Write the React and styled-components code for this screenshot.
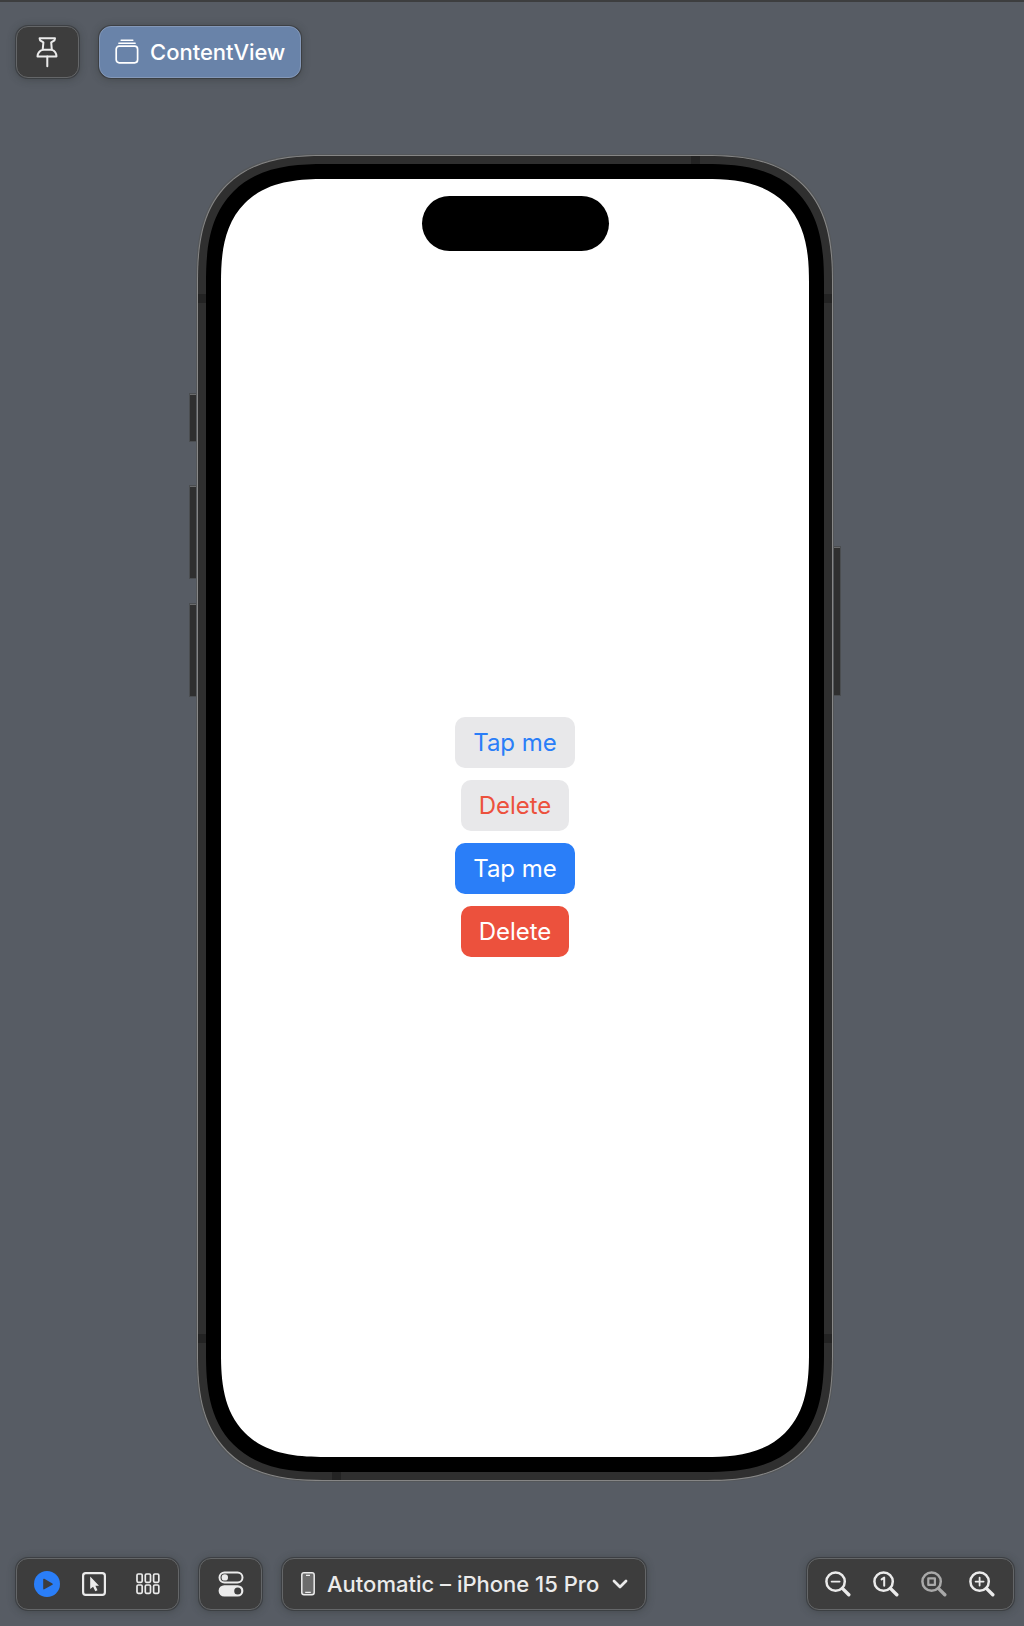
import React from "react";
import styled, { createGlobalStyle, css } from "styled-components";

const GlobalStyle = createGlobalStyle`
  *, *::before, *::after { box-sizing: border-box; }
  body {
    margin: 0;
    background: #575c64;
    font-family: Inter, "Liberation Sans", sans-serif;
  }
  button, select { font: inherit; color: inherit; }
`;

const Canvas = styled.main`
  min-height: 100vh;
  display: flex;
  flex-direction: column;
  padding: 24px 10px 16px 16px;
  border-top: 2px solid #3d3e3f;
  background: #575c64;
`;

const Toolbar = styled.div`
  display: flex;
  align-items: center;
  gap: 20px;
`;

const Spacer = styled.div`
  flex: 1;
`;

const panel = css`
  display: flex;
  align-items: center;
  height: 52px;
  border: 1px solid #646668;
  border-radius: 12px;
  background: #3d3d3d;
  color: #ebebeb;
  box-shadow: 0 0 0 1px rgba(50, 52, 54, 0.6), 0 1px 8px rgba(40, 46, 44, 0.45);
`;

const PanelButton = styled.button`
  ${panel}
  justify-content: center;
  width: 63px;
  padding: 0;
`;

const ViewTab = styled.button`
  ${panel}
  gap: 11px;
  padding: 0 15px;
  border-color: #8498b8;
  background: #6983a9;
  color: #fff;
  font-size: 22px;
  font-weight: 500;
`;

const Panel = styled.div`
  ${panel}
  gap: ${(p) => p.$gap || 22}px;
  padding: 0 18px 0 17px;
`;

const Pair = styled.div`
  display: flex;
  align-items: center;
  gap: 22px;
`;

const IconButton = styled.button`
  display: flex;
  padding: 0;
  border: 0;
  background: none;
  opacity: ${(p) => (p.disabled ? 0.62 : 1)};
`;

const DevicePicker = styled.label`
  ${panel}
  gap: 12px;
  padding: 0 17px 0 18px;
  font-size: 22px;
  font-weight: 500;
`;

const DeviceSelect = styled.select`
  appearance: none;
  margin: 0;
  padding: 0;
  border: 0;
  background: none;
  line-height: 32px;
`;

const Stage = styled.section`
  flex: 1;
  display: flex;
  justify-content: center;
  align-items: center;
  padding: 77px 0;
`;

const Corner = css`
  border-radius: ${(p) => p.$round}px;
  @supports (corner-shape: superellipse(1.4)) {
    border-radius: ${(p) => p.$smooth}px;
    corner-shape: superellipse(1.4);
  }
`;

const Device = styled.div`
  position: relative;
  width: 100%;
  max-width: 636px;
`;

const Frame = styled.div`
  ${Corner}
  position: relative;
  padding: 8px;
  border: 1px solid #868686;
  background: #2f2f2f;
  box-shadow: 0 0 0 1px #54575a;
`;

const Bezel = styled.div`
  ${Corner}
  padding: 15px;
  background: #000;
`;

const Screen = styled.div`
  ${Corner}
  display: flex;
  flex-direction: column;
  align-items: center;
  aspect-ratio: 588 / 1278;
  padding: 17px 0 34px;
  background: #fff;
`;

const Island = styled.div`
  width: 187px;
  height: 55px;
  border-radius: 28px;
  background: #000;
`;

const Actions = styled.div`
  flex: 1;
  display: flex;
  flex-direction: column;
  align-items: center;
  justify-content: center;
  gap: 12px;
`;

const tones = {
  blue: "#2a7ef8",
  red: "#ec513d",
};

const ActionButton = styled.button`
  height: 51px;
  padding: 0 18px;
  border: 0;
  border-radius: 10px;
  font-size: 24px;
  background: ${(p) => (p.$filled ? tones[p.$tone] : "#e8e8ea")};
  color: ${(p) => (p.$filled ? "#fff" : tones[p.$tone])};
`;

const SideKey = styled.span`
  position: absolute;
  top: ${(p) => p.$top}px;
  ${(p) => p.$side}: -7px;
  width: 8px;
  height: ${(p) => p.$length}px;
  border-top: 1px solid #6a6b6c;
  background: #2f2f2f;
  box-shadow: 0 0 0 1px #4b4e51;
`;

const Antenna = styled.span`
  position: absolute;
  background: #232323;
  ${(p) =>
    p.$edge === "left" || p.$edge === "right"
      ? css`
          width: 8px;
          height: 9px;
        `
      : css`
          width: 9px;
          height: 8px;
        `}
  ${(p) => p.$edge}: 0;
  ${(p) => p.$from}: ${(p) => p.$at}px;
`;

function PinIcon() {
  return (
    <svg width="26" height="32" viewBox="0 0 26 32" fill="none" stroke="currentColor" strokeWidth="2" strokeLinejoin="round" strokeLinecap="round" aria-hidden="true">
      <path d="M4.6 2.2H20L19.5 4.4L16.2 6.4L16.8 13.7C19.7 15 21.4 17.2 21.5 20.4H2.5C2.6 17.2 4.6 15 7.7 13.7L8.4 6.4L5.1 4.4Z" />
      <path d="M7.7 13.7H16.8M12.3 20.5V30.3" />
    </svg>
  );
}

function StackIcon() {
  return (
    <svg width="24" height="28" viewBox="0 0 24 28" fill="none" stroke="currentColor" strokeLinecap="round" aria-hidden="true">
      <path d="M6.2 2.2H17.8M3.9 5.2H20.1" strokeWidth="1.6" />
      <rect x="1.2" y="8.2" width="21.4" height="16.6" rx="3" strokeWidth="1.7" />
    </svg>
  );
}

function PlayIcon() {
  return (
    <svg width="26" height="26" viewBox="0 0 26 26" aria-hidden="true">
      <circle cx="13" cy="13" r="13" fill="#2a7ef8" />
      <path d="M9.2 8.4V17.6Q9.2 18.8 10.3 18.3L18.4 13.7Q19.3 13 18.4 12.4L10.3 7.8Q9.2 7.3 9.2 8.4Z" fill="#3d3d3d" />
    </svg>
  );
}

function SelectIcon() {
  return (
    <svg width="24" height="24" viewBox="0 0 24 24" aria-hidden="true">
      <rect x="1.1" y="1.1" width="21.8" height="21.8" rx="2.6" fill="none" stroke="currentColor" strokeWidth="2.2" />
      <path d="M8.2 4.6V17.1L11.1 14.7L13.3 19.2L15.5 18.2L13.4 13.8H17Z" fill="currentColor" />
    </svg>
  );
}

function GridIcon() {
  return (
    <svg width="24" height="22" viewBox="0 0 24 22" fill="none" stroke="currentColor" strokeWidth="1.7" aria-hidden="true">
      {[1, 12].map((y) =>
        [1, 9.3, 17.6].map((x) => <rect key={`${x}-${y}`} x={x} y={y} width="5.2" height="8.3" rx="1.2" />)
      )}
    </svg>
  );
}

function TogglesIcon() {
  return (
    <svg width="26" height="26" viewBox="0 0 26 26" aria-hidden="true">
      <rect x="1.5" y="1.4" width="23" height="10" rx="5" fill="none" stroke="currentColor" strokeWidth="2" />
      <circle cx="6.8" cy="6.4" r="3.2" fill="currentColor" />
      <rect x="0.6" y="14.2" width="24.8" height="11.4" rx="5.7" fill="currentColor" />
      <circle cx="19.7" cy="19.9" r="3.5" fill="#3d3d3d" />
    </svg>
  );
}

function PhoneIcon() {
  return (
    <svg width="14" height="24" viewBox="0 0 14 24" aria-hidden="true">
      <rect x="0.8" y="0.8" width="12.4" height="22" rx="2.2" fill="#6c6c6c" stroke="currentColor" strokeWidth="1.5" />
      <path d="M5 3.4H9M4.2 20.4H9.8" stroke="currentColor" strokeWidth="1.1" />
    </svg>
  );
}

function ChevronIcon() {
  return (
    <svg width="16" height="12" viewBox="0 0 16 12" fill="none" stroke="currentColor" strokeWidth="2.8" strokeLinecap="round" strokeLinejoin="round" aria-hidden="true">
      <path d="M2 3L8 9L14 3" />
    </svg>
  );
}

function LensIcon({ children }) {
  return (
    <svg width="26" height="26" viewBox="0 0 26 26" fill="none" stroke="currentColor" strokeLinecap="round" strokeLinejoin="round" aria-hidden="true">
      <circle cx="10.6" cy="10.6" r="9.2" strokeWidth="2.5" />
      <path d="M17.4 17.4L23.8 23.8" strokeWidth="3.4" />
      <g strokeWidth="1.8">{children}</g>
    </svg>
  );
}

const zoomControls = [
  { label: "Zoom out", mark: <path d="M6.6 10.6H14.6" /> },
  { label: "Zoom to actual size", mark: <path d="M8.6 8.4L11.2 6.6V14.8" strokeWidth="2" /> },
  { label: "Zoom to fit", mark: <rect x="7.3" y="7.3" width="6.6" height="6.6" strokeWidth="2.2" />, disabled: true },
  { label: "Zoom in", mark: <path d="M6.6 10.6H14.6M10.6 6.6V14.6" /> },
];

const actions = [
  { text: "Tap me", tone: "blue" },
  { text: "Delete", tone: "red" },
  { text: "Tap me", tone: "blue", filled: true },
  { text: "Delete", tone: "red", filled: true },
];

function PhonePreview() {
  return (
    <Device>
      <SideKey $side="left" $top={239} $length={47} />
      <SideKey $side="left" $top={331} $length={92} />
      <SideKey $side="left" $top={449} $length={92} />
      <SideKey $side="right" $top={392} $length={148} />
      <Frame $round={104} $smooth={128}>
        <Antenna $edge="left" $from="top" $at={138} />
        <Antenna $edge="right" $from="top" $at={138} />
        <Antenna $edge="left" $from="bottom" $at={137} />
        <Antenna $edge="right" $from="bottom" $at={137} />
        <Antenna $edge="top" $from="right" $at={132} />
        <Antenna $edge="bottom" $from="left" $at={134} />
        <Bezel $round={95} $smooth={119}>
          <Screen $round={80} $smooth={104}>
            <Island />
            <Actions>
              {actions.map((a, i) => (
                <ActionButton key={i} type="button" $tone={a.tone} $filled={a.filled}>
                  {a.text}
                </ActionButton>
              ))}
            </Actions>
          </Screen>
        </Bezel>
      </Frame>
    </Device>
  );
}

export default function App() {
  return (
    <>
      <GlobalStyle />
      <Canvas>
        <Toolbar>
          <PanelButton type="button" aria-label="Pin preview">
            <PinIcon />
          </PanelButton>
          <ViewTab type="button">
            <StackIcon />
            ContentView
          </ViewTab>
        </Toolbar>
        <Stage>
          <PhonePreview />
        </Stage>
        <Toolbar>
          <Panel $gap={30}>
            <Pair>
              <IconButton type="button" aria-label="Live preview">
                <PlayIcon />
              </IconButton>
              <IconButton type="button" aria-label="Selectable preview">
                <SelectIcon />
              </IconButton>
            </Pair>
            <IconButton type="button" aria-label="Variants">
              <GridIcon />
            </IconButton>
          </Panel>
          <PanelButton type="button" aria-label="Device settings">
            <TogglesIcon />
          </PanelButton>
          <DevicePicker>
            <PhoneIcon />
            <DeviceSelect aria-label="Preview device">
              <option>Automatic – iPhone 15 Pro</option>
            </DeviceSelect>
            <ChevronIcon />
          </DevicePicker>
          <Spacer />
          <Panel>
            {zoomControls.map((z) => (
              <IconButton key={z.label} type="button" aria-label={z.label} disabled={z.disabled}>
                <LensIcon>{z.mark}</LensIcon>
              </IconButton>
            ))}
          </Panel>
        </Toolbar>
      </Canvas>
    </>
  );
}
